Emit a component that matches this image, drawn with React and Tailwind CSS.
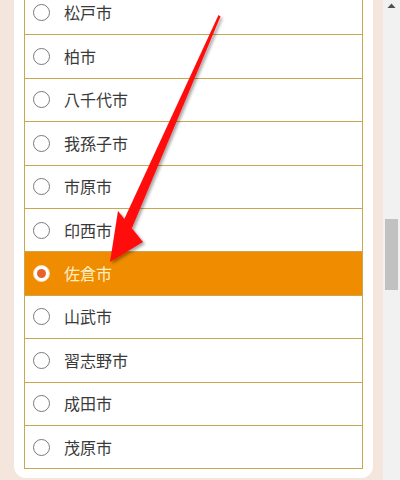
import React from "react";

const cities = [
  "松戸市",
  "柏市",
  "八千代市",
  "我孫子市",
  "市原市",
  "印西市",
  "佐倉市",
  "山武市",
  "習志野市",
  "成田市",
  "茂原市",
];

function Row({ name, selected, first }) {
  return (
    <div
      className={
        "flex items-center h-[43.4px] pl-[8px] " +
        (first ? "" : "border-t border-[#c9a652] ") +
        (selected ? "bg-[#ef8c00]" : "bg-white")
      }
    >
      {selected ? (
        <span className="w-[17px] h-[17px] rounded-full bg-white border border-[#f6dcb0] flex items-center justify-center shrink-0">
          <span className="w-[9px] h-[9px] rounded-full bg-[#e4642c]" />
        </span>
      ) : (
        <span className="w-[17px] h-[17px] rounded-full bg-white border-[1.5px] border-[#7a7a7a] shrink-0" />
      )}
      <span
        className={
          "ml-[14px] text-[16px] leading-none mb-[1px] " +
          (selected ? "text-[#fdeec4]" : "text-[#3a3a3a]")
        }
      >
        {name}
      </span>
    </div>
  );
}

export default function App() {
  return (
    <div
      className="relative w-[400px] h-[480px] overflow-hidden flex bg-[#f4e6dc]"
      style={{ fontFamily: '"Noto Sans CJK JP", "Noto Sans", sans-serif' }}
    >
      <div className="flex-1 pl-[14px] pr-[10px]">
        <div className="mt-[-20px] bg-white rounded-b-[12px] pt-[10px] pb-[9px] px-[10px]">
          <div className="border border-[#c9a652]">
            {cities.map((c, i) => (
              <Row key={c} name={c} first={i === 0} selected={c === "佐倉市"} />
            ))}
          </div>
        </div>
      </div>
      <div className="w-[17px] bg-[#f1f1f1] flex flex-col items-center">
        <svg width="9" height="6" viewBox="0 0 9 6" className="mt-[3px]">
          <polygon points="4.5,0.5 8.5,5 0.5,5" fill="#505050" />
        </svg>
        <div className="mt-[210px] w-[13px] h-[71px] bg-[#c1c1c1]" />
      </div>
      <svg
        className="absolute inset-0 pointer-events-none"
        width="400"
        height="480"
        viewBox="0 0 400 480"
      >
        <defs>
          <filter id="sh" x="-20%" y="-20%" width="140%" height="140%">
            <feDropShadow dx="2" dy="2" stdDeviation="1.8" floodColor="#000" floodOpacity="0.35" />
          </filter>
        </defs>
        <g filter="url(#sh)" fill="#ff0a0a">
          <polygon points="218.5,15 220.5,16.5 132,228 122,224" />
          <polygon points="118,211 143,242 110,262" />
        </g>
      </svg>
    </div>
  );
}
